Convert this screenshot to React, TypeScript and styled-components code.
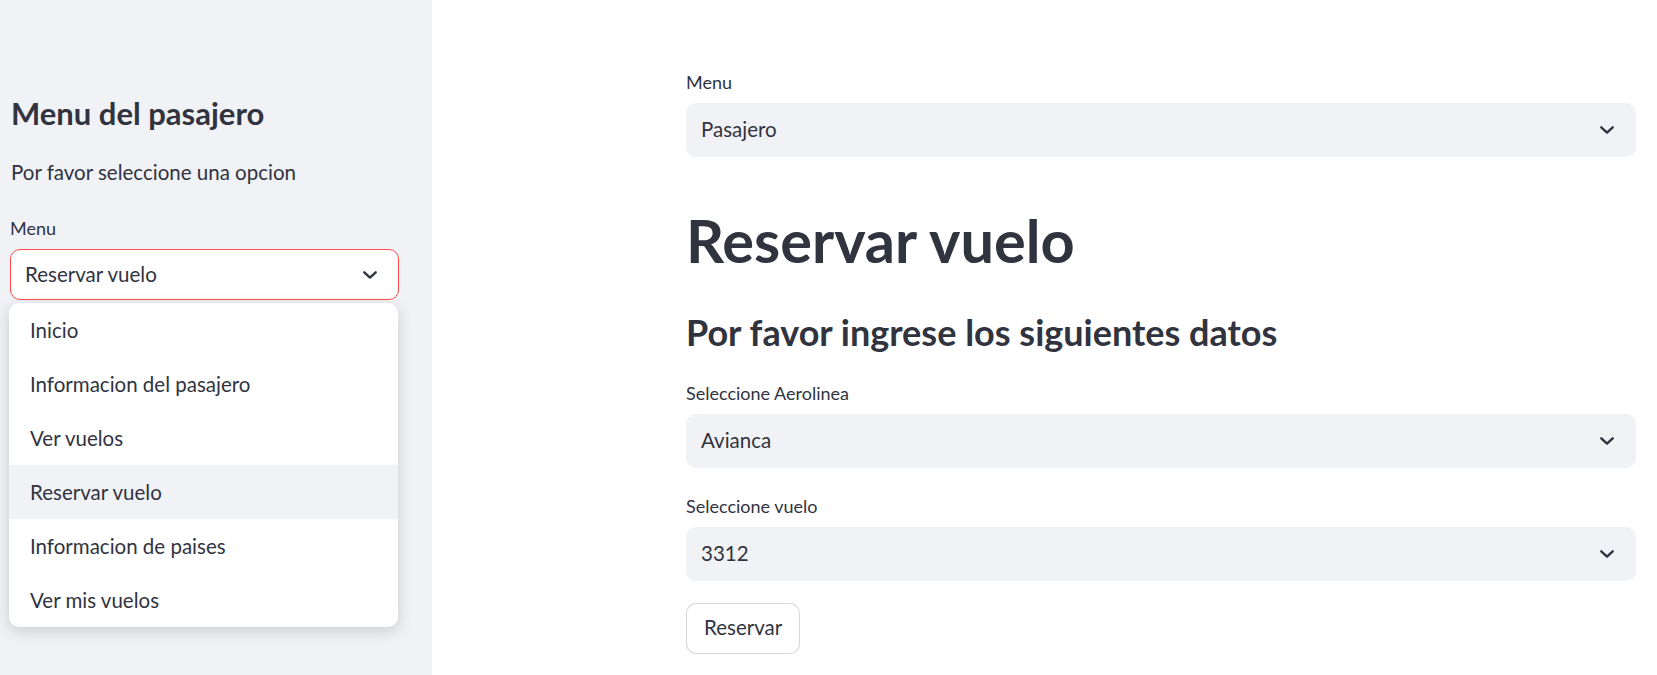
import React, { FC } from 'react';
import styled, { createGlobalStyle } from 'styled-components';

const GlobalStyle = createGlobalStyle`
	html, body {
		margin: 0;
		padding: 0;
		background: #ffffff;
	}
	body {
		font-family: 'Source Sans Pro', Lato, 'Noto Sans', sans-serif;
		color: #31333f;
	}
`;

const Page = styled.div`
	display: flex;
	width: 100%;
	height: 100vh;
	overflow: hidden;
`;

const Sidebar = styled.aside`
	flex: 0 0 432px;
	box-sizing: border-box;
	background-color: #f0f2f6;
	padding: 95px 33px 0 10px;
`;

const SidebarHeader = styled.h2`
	margin: 0 0 0 1px;
	font-size: 31px;
	line-height: 36px;
	font-weight: 700;
	color: #31333f;
`;

const Paragraph = styled.p`
	margin: 27px 0 0 1px;
	font-size: 20.5px;
	line-height: 28px;
	color: #31333f;
`;

const Main = styled.main`
	flex: 1;
	box-sizing: border-box;
	padding: 70px 21px 0 254px;
`;

const Field = styled.div<{ $top?: number }>`
	position: relative;
	margin-top: ${({ $top }) => $top ?? 0}px;
`;

const Label = styled.label`
	display: block;
	font-size: 18px;
	line-height: 24px;
	color: #31333f;
	margin-bottom: 9px;
`;

const SelectBox = styled.div<{ $focused?: boolean; $height?: number }>`
	display: flex;
	align-items: center;
	justify-content: space-between;
	box-sizing: border-box;
	height: ${({ $height }) => $height ?? 54}px;
	padding: 0 21px 2px 14px;
	border-radius: 10px;
	border: 1px solid ${({ $focused }) => ($focused ? '#ff4b4b' : '#f0f2f6')};
	background-color: ${({ $focused }) => ($focused ? '#ffffff' : '#f0f2f6')};
	font-size: 20.5px;
	color: #31333f;

	svg {
		margin-top: 2px;
	}
`;

const Chevron: FC = () => (
	<svg width="14" height="8" viewBox="0 0 14 8" fill="none">
		<path d="M1.3 1.3L7 6.6l5.7-5.3" stroke="#31333f" strokeWidth="2.4" strokeLinecap="round" strokeLinejoin="round" />
	</svg>
);

const Dropdown = styled.ul`
	position: absolute;
	top: calc(100% + 3px);
	left: -1px;
	width: 389px;
	margin: 0;
	padding: 0;
	list-style: none;
	background: #ffffff;
	border-radius: 10px;
	box-shadow: 0 4px 16px rgba(0, 0, 0, 0.16);
	overflow: hidden;
	z-index: 10;
`;

const Option = styled.li<{ $active?: boolean }>`
	height: 54px;
	display: flex;
	align-items: center;
	padding-left: 21px;
	font-size: 20.5px;
	color: #31333f;
	background-color: ${({ $active }) => ($active ? '#f0f2f6' : 'transparent')};
`;

const Title = styled.h1`
	margin: 50px 0 0;
	font-size: 59.5px;
	line-height: 67px;
	font-weight: 700;
	color: #31333f;
`;

const Subtitle = styled.h2`
	margin: 34px 0 0;
	font-size: 36px;
	line-height: 48px;
	font-weight: 700;
	color: #31333f;
`;

const Button = styled.button`
	display: block;
	margin-top: 22px;
	height: 51px;
	padding: 0 17px 3px;
	box-sizing: border-box;
	border: 1px solid rgba(49, 51, 63, 0.2);
	border-radius: 10px;
	background: #ffffff;
	font-family: inherit;
	font-size: 20.5px;
	color: #31333f;
`;

const options = [
	'Inicio',
	'Informacion del pasajero',
	'Ver vuelos',
	'Reservar vuelo',
	'Informacion de paises',
	'Ver mis vuelos',
];

const App: FC = () => {
	const selected = 'Reservar vuelo';

	return (
		<>
			<GlobalStyle />
			<Page>
				<Sidebar>
					<SidebarHeader>Menu del pasajero</SidebarHeader>
					<Paragraph>Por favor seleccione una opcion</Paragraph>
					<Field $top={30}>
						<Label>Menu</Label>
						<SelectBox $focused $height={51}>
							<span>{selected}</span>
							<Chevron />
						</SelectBox>
						<Dropdown>
							{options.map((o) => (
								<Option key={o} $active={o === selected}>
									{o}
								</Option>
							))}
						</Dropdown>
					</Field>
				</Sidebar>
				<Main>
					<Field>
						<Label>Menu</Label>
						<SelectBox>
							<span>Pasajero</span>
							<Chevron />
						</SelectBox>
					</Field>
					<Title>Reservar vuelo</Title>
					<Subtitle>Por favor ingrese los siguientes datos</Subtitle>
					<Field $top={25}>
						<Label>Seleccione Aerolinea</Label>
						<SelectBox>
							<span>Avianca</span>
							<Chevron />
						</SelectBox>
					</Field>
					<Field $top={26}>
						<Label>Seleccione vuelo</Label>
						<SelectBox>
							<span>3312</span>
							<Chevron />
						</SelectBox>
					</Field>
					<Button>Reservar</Button>
				</Main>
			</Page>
		</>
	);
};

export default App;
